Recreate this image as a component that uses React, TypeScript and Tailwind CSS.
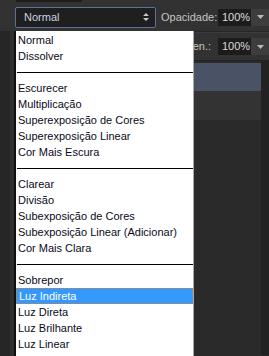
const groups = [
  ['Normal', 'Dissolver'],
  ['Escurecer', 'Multiplicação', 'Superexposição de Cores', 'Superexposição Linear', 'Cor Mais Escura'],
  ['Clarear', 'Divisão', 'Subexposição de Cores', 'Subexposição Linear (Adicionar)', 'Cor Mais Clara'],
  ['Sobrepor', 'Luz Indireta', 'Luz Direta', 'Luz Brilhante', 'Luz Linear'],
]

const selected = 'Luz Indireta'

function PercentField() {
  return (
    <div className="flex h-[17px] shrink-0">
      <div className="w-[33px] bg-[#1c1c1c] text-[#dcdcdc] text-[11px] leading-[17px] pl-[4px] whitespace-nowrap">100%</div>
      <div className="w-[18px] bg-[#3d3d3d] flex items-center justify-center">
        <svg width="7" height="4" viewBox="0 0 7 4">
          <path d="M0 0h7L3.5 4z" fill="#b8b8b8" />
        </svg>
      </div>
    </div>
  )
}

export default function App() {
  return (
    <div className="relative w-[269px] h-[356px] overflow-hidden bg-[#2a2a2a] font-['Liberation_Sans',Arial,sans-serif]">
      {/* Toolbar */}
      <div className="bg-[#323232]">
        <div className="h-[3px] flex">
          <div className="ml-[16px] w-[66px] h-[2px] bg-[#1e1e1e]" />
        </div>
        <div className="h-[29px] flex items-center border-b border-[#262626]">
          <div className="ml-[15px] w-[141px] shrink-0 h-[21px] rounded-[2px] border border-[#5b7299] bg-[#1f1f1f] flex items-center justify-between pl-[8px] pr-[6px]">
            <span className="text-[11px] text-[#c9d2e2]">Normal</span>
            <svg width="6" height="10" viewBox="0 0 6 10">
              <path d="M0 4h6L3 1zM0 6h6L3 9z" fill="#c8c8c8" />
            </svg>
          </div>
          <span className="ml-[5px] w-[52px] shrink-0 whitespace-nowrap text-[11px] text-[#c4c4c4]">Opacidade:</span>
          <div className="ml-[5px]">
            <PercentField />
          </div>
        </div>
        <div className="h-[1px] bg-[#3c3c3c]" />
        <div className="h-[28px] flex items-center justify-end border-b border-[#242424]">
          <span className="text-[11px] text-[#c4c4c4] mr-[7px] whitespace-nowrap">Preen.:</span>
          <PercentField />
        </div>
      </div>

      {/* Panels behind menu */}
      <div className="flex h-[294px]">
        <div className="w-[193px] bg-[#2a2a2a]" />
        <div className="flex-1 flex flex-col">
          <div className="mt-[2px] h-[28px] bg-[#4a5365]" />
          <div className="h-[30px] bg-[#333333] border-b border-[#2a2a2a]" />
          <div className="flex-1 bg-[#2a2a2a]" />
        </div>
        <div className="w-[8px] bg-[#222222]" />
      </div>

      {/* Left edge strip */}
      <div className="absolute left-0 top-[31px] bottom-0 w-[15px] flex">
        <div className="w-[10px] bg-[#262626]" />
        <div className="w-[4px] bg-[#2f2f2f]" />
        <div className="w-[1px] bg-[#111111]" />
      </div>

      {/* Blend mode dropdown */}
      <div className="absolute left-[15px] top-[31px] w-[179px] bottom-0 bg-white border-l border-[#101010] border-r border-r-[#a9a9a9] pt-[1px]">
        {groups.map((g, gi) => (
          <div key={gi}>
            {gi > 0 && (
              <div className="h-[16px] flex items-center pl-[1px]">
                <div className="w-full h-[1px] bg-black" />
              </div>
            )}
            {g.map(item => (
              <div
                key={item}
                className={`h-[16px] pl-[2px] text-[11px] ${
                  item === selected
                    ? 'bg-[#3399ff] text-white border border-dotted border-[#e07b2a] leading-[14px] pl-[1px]'
                    : 'text-[#0a0a1a] leading-[16px]'
                }`}
              >
                {item}
              </div>
            ))}
          </div>
        ))}
      </div>
    </div>
  )
}
